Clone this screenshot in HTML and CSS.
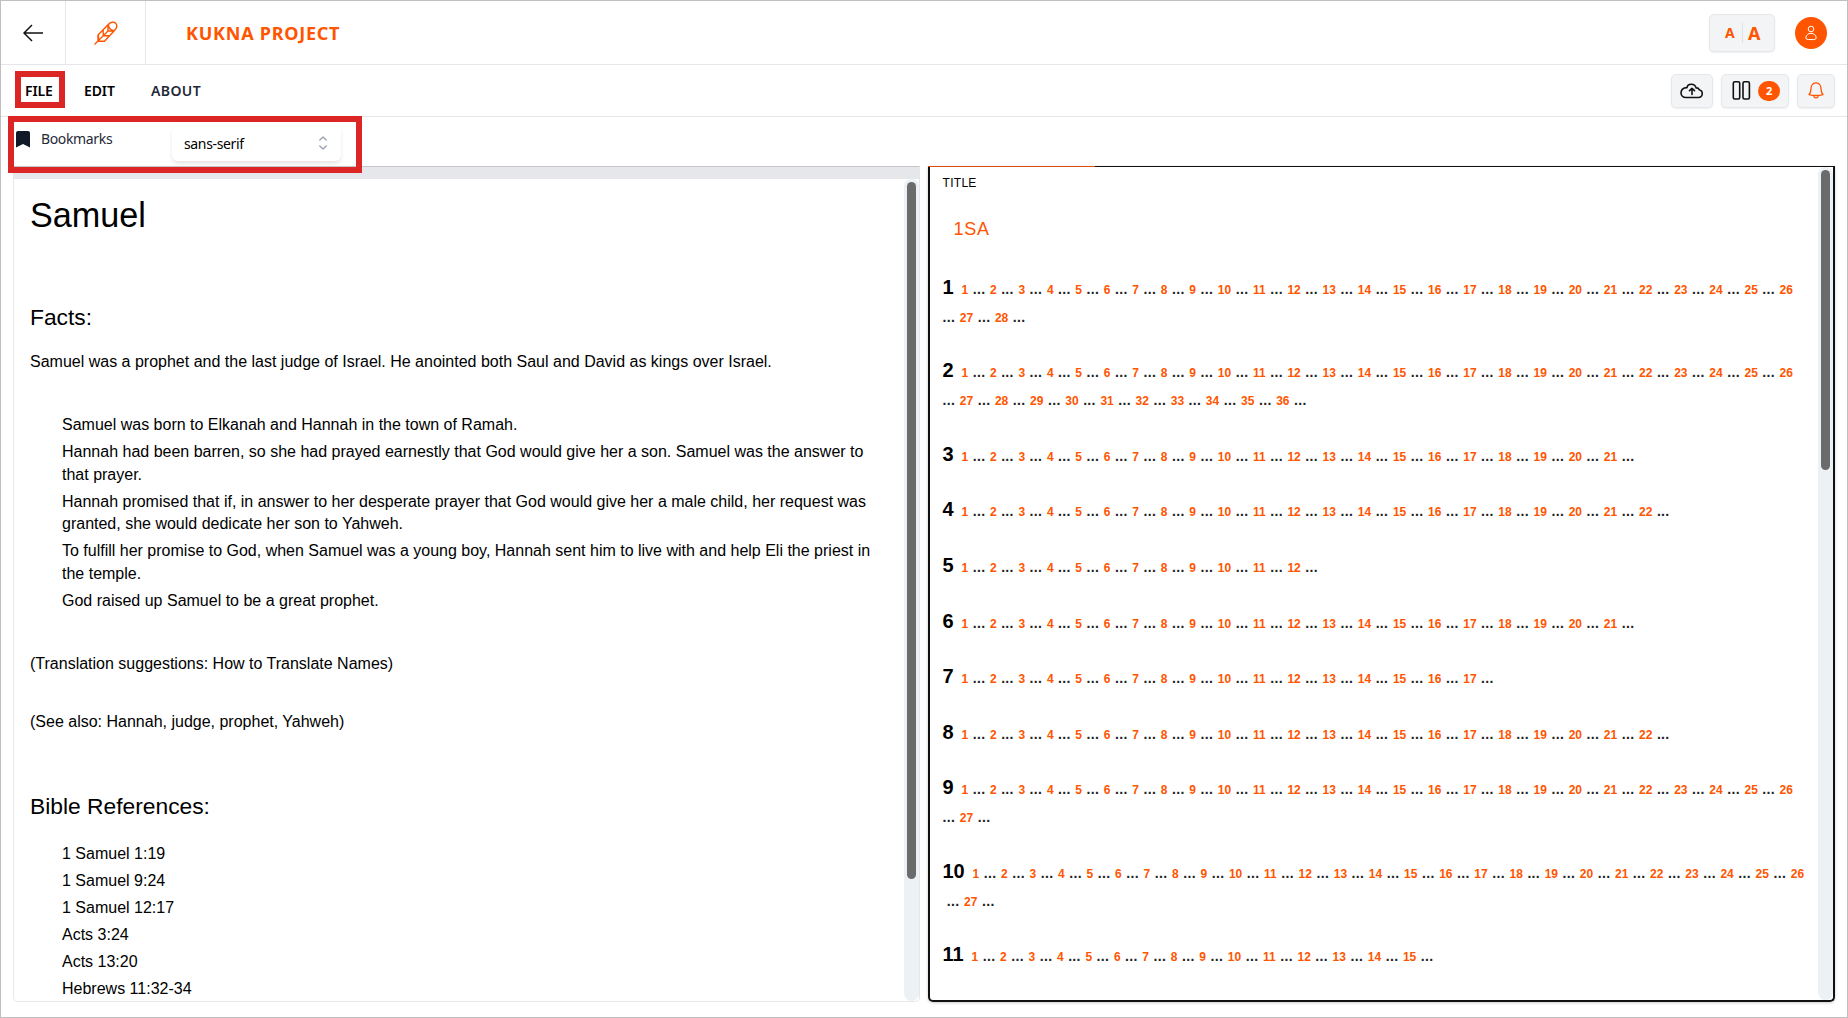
FILE: index.html
```html
<!DOCTYPE html>
<html lang="en">
<head>
<meta charset="utf-8">
<title>Kukna Project</title>
<link rel="stylesheet" href="styles.css">
</head>
<body>
<div class="app">
  <header class="topbar">
    <div class="cell back"><svg width="20" height="18" viewBox="0 0 20 18" fill="none" stroke="#111" stroke-width="1.5"><path d="M9 1 1 9l8 8M1 9h19"/></svg></div>
    <div class="cell logo"><svg width="24" height="24" viewBox="0 0 24 24" fill="none" stroke="#f50" stroke-width="1.4" stroke-linejoin="round" stroke-linecap="round"><path d="M1 23 14 10M4 20.200V14L14.500 3.300c2-2.300 5.500-2.800 7.200-1 1.800 1.800 1.300 5-1 7L10.500 20.200H4M9.200 8.800V14.500M14.500 3.500c-.4 3.200 2.300 6.200 6 6M9.200 14.800h6M4.500 19.500v-5M14 4v6h6"/></svg></div>
    <h1 class="project">KUKNA PROJECT</h1>
    <div class="size"><span class="small">A</span><i></i><span class="large">A</span></div>
    <div class="avatar"><svg width="12" height="16" viewBox="0 0 12 16" fill="none" stroke="#fff" stroke-width="1"><circle cx="6" cy="4" r="2.800"/><path d="M.8 13c0-6.200 10.400-6.200 10.400 0 0 1.200-1.500 1.600-5.200 1.600S.8 14.200.8 13z"/></svg></div>
  </header>
  <nav class="menubar">
    <a class="file">FILE</a><a class="edit">EDIT</a><a class="about">ABOUT</a>
    <div class="tools">
      <div class="tool cloud"><svg width="24" height="16" viewBox="0 0 24 16" fill="none" stroke="#111" stroke-width="1.6" stroke-linecap="round" stroke-linejoin="round"><path d="M6 14.500h12.500a3.900 3.900 0 0 0 .700-7.700c-.5-1.500-1.500-2-3-1.900C14.600-.2 7.600.200 7 4.600 3 4.500 1 7 1 9.800c0 2.700 2 4.700 5 4.700zM12 11.500v-6M9.500 7.700 12 5.300l2.500 2.400"/></svg></div>
      <div class="tool columns"><svg width="19" height="19" viewBox="0 0 19 19" fill="none" stroke="#111" stroke-width="1.600"><rect x="1.300" y=".8" width="6.400" height="17.200" rx="1.500"/><rect x="11" y=".8" width="6.400" height="17.200" rx="1.500"/></svg><span class="badge">2</span></div>
      <div class="tool bell"><svg width="16" height="17" viewBox="0 0 16 17" fill="none" stroke="#f50" stroke-width="1.300" stroke-linejoin="round"><path d="M1 12.600c3-2.600 1-6.600 3-9.600 1.800-2.800 6.200-2.800 8 0 2 3 0 7 3 9.600-4.600 1.200-9.400 1.200-14 0zM5.500 13.500c.5 3.200 4.500 3.200 5 0"/></svg></div>
    </div>
  </nav>
  <div class="submenu">
    <svg class="mark" width="14" height="17" viewBox="0 0 14 17" fill="#111827"><path d="M0 2a2 2 0 0 1 2-2h10a2 2 0 0 1 2 2v14.500L7 13 0 16.500z"/></svg>
    <span class="bookmarks">Bookmarks</span>
    <div class="select"><span>sans-serif</span><svg width="8" height="14" viewBox="0 0 8 14" fill="none" stroke="#9ca3af" stroke-width="1.400" stroke-linecap="round" stroke-linejoin="round"><path d="m.800 4 3.200-3 3.200 3M.800 10 4 13l3.200-3"/></svg></div>
  </div>
  <main class="panels">
    <section class="panel words">
      <div class="strip"></div>
      <div class="body">
        <article>
          <h2 class="term">Samuel</h2>
          <h3 class="facts">Facts:</h3>
          <p class="intro">Samuel was a prophet and the last judge of Israel. He anointed both Saul and David as kings over Israel.</p>
          <ul class="story">
            <li>Samuel was born to Elkanah and Hannah in the town of Ramah.</li>
            <li>Hannah had been barren, so she had prayed earnestly that God would give her a son. Samuel was the answer to that prayer.</li>
            <li>Hannah promised that if, in answer to her desperate prayer that God would give her a male child, her request was granted, she would dedicate her son to Yahweh.</li>
            <li>To fulfill her promise to God, when Samuel was a young boy, Hannah sent him to live with and help Eli the priest in the temple.</li>
            <li>God raised up Samuel to be a great prophet.</li>
          </ul>
          <p class="suggest">(Translation suggestions: How to Translate Names)</p>
          <p class="also">(See also: Hannah, judge, prophet, Yahweh)</p>
          <h3 class="refs">Bible References:</h3>
          <ul class="reflist">
            <li>1 Samuel 1:19</li><li>1 Samuel 9:24</li><li>1 Samuel 12:17</li><li>Acts 3:24</li><li>Acts 13:20</li><li>Hebrews 11:32-34</li>
          </ul>
        </article>
        <div class="track"><div class="thumb"></div></div>
      </div>
    </section>
    <section class="panel editor">
      <div class="text">
        <div class="label">TITLE</div>
        <div class="book">1SA</div>
        <div id="chapters"></div>
      </div>
      <div class="track"><div class="thumb"></div></div>
      <div class="accent"></div>
    </section>
  </main>
  <div class="mark-box box-file"></div>
  <div class="mark-box box-sub"></div>
</div>
<script src="script.js"></script>
</body>
</html>
```
FILE: script.js
```js
// Number of verses in each chapter of 1 Samuel
const verses = [28, 36, 21, 22, 12, 21, 17, 22, 27, 27, 15];
const root = document.getElementById('chapters');
verses.forEach((count, i) => {
  let html = `<b class="chapter">${i + 1}</b>`;
  for (let v = 1; v <= count; v++) {
    const last = v === 26 && count > 26;
    html += `<b class="verse">${v}</b>${last ? (i === 9 ? '<br>&nbsp;...' : '<br>...') : ' ...'} `;
  }
  const p = document.createElement('p');
  p.innerHTML = html;
  root.append(p);
});
```
FILE: styles.css
```css
* { box-sizing: border-box; margin: 0; padding: 0; }
body { background: #fff; font-family: "Noto Sans", sans-serif; color: #000; }
ul { list-style: none; }
svg { display: block; flex: none; }
.app { position: relative; display: flex; flex-direction: column; width: 1848px; height: 1018px; border: 1px solid #c0c0c0; overflow: hidden; }

.topbar { display: flex; align-items: center; height: 64px; flex: none; border-bottom: 1px solid #e5e7eb; padding-right: 20px; }
.cell { display: flex; align-items: center; justify-content: center; height: 63px; border-right: 1px solid #e5e7eb; }
.back { width: 65px; }
.logo { width: 80px; padding-left: 1px; }
.project { flex: 1; padding-left: 40px; font-size: 18px; font-weight: 700; color: #f50; letter-spacing: .75px; }
.size { display: flex; align-items: center; width: 66px; height: 38px; border: 1px solid #e5e7eb; border-radius: 5px; background: #f3f4f6; box-shadow: 0 1px 2px #0001; color: #f50; font-weight: 700; padding-left: 15px; }
.size i { width: 1px; height: 20px; background: #dfe2e7; margin: 0 5px 0 6px; }
.small { font-size: 14px; width: 11px; }
.large { font-size: 18px; }
.avatar { display: flex; align-items: center; justify-content: center; width: 32px; height: 32px; margin-left: 20px; border-radius: 50%; background: #f50; }

.menubar { display: flex; align-items: center; height: 52px; flex: none; border-bottom: 1px solid #e5e7eb; padding: 0 12px 0 24px; font-size: 14px; font-weight: 600; letter-spacing: -.1px; }
.file { width: 59px; }
.edit { width: 67px; }
.about { color: #1f2937; letter-spacing: .4px; }
.tools { display: flex; gap: 8px; margin-left: auto; }
.tool { display: flex; align-items: center; justify-content: center; height: 34px; border: 1px solid #e5e7eb; border-radius: 5px; background: #f3f4f6; box-shadow: 0 1px 2px #0001; }
.cloud { width: 42px; }
.columns { width: 68px; gap: 7px; padding-left: 2px; }
.bell { width: 38px; }
.badge { width: 22px; height: 20px; border-radius: 10px; background: #f50; color: #fff; font-size: 11px; font-weight: 700; line-height: 20px; text-align: center; }

.submenu { display: flex; height: 49px; flex: none; padding-left: 15px; font-size: 14px; letter-spacing: -.35px; }
.mark { margin-top: 14px; }
.bookmarks { width: 131px; margin: 12px 0 0 11px; line-height: 20px; color: #1f2937; }
.select { display: flex; align-items: center; justify-content: space-between; width: 169px; height: 36px; margin-top: 8px; padding: 0 14px 0 12px; border-radius: 6px; background: #fff; box-shadow: 0 3px 5px -1px #0002; }

.panels { display: flex; gap: 8px; height: 836px; flex: none; padding: 0 12px; font-family: "Liberation Sans", Arial, sans-serif; }
.panel { display: flex; height: 836px; }
.words { flex-direction: column; width: 907px; border: 1px solid #e5e7eb; border-top: 1px solid #c3c6cb; border-radius: 0 0 5px 5px; overflow: hidden; }
.strip { height: 12px; background: #e5e7eb; flex: none; }
.body { display: flex; justify-content: space-between; height: 822px; }
article { width: 865px; padding: 15px 0 0 16px; font-size: 16px; line-height: 22.4px; }
.term { font-size: 34.200px; line-height: 42px; font-weight: 400; }
.facts, .refs { font-size: 22.800px; line-height: 28px; font-weight: 400; }
.facts { margin-top: 67px; }
.intro { margin-top: 19.500px; }
.story { margin-top: 41.500px; padding-left: 32px; }
li + li { margin-top: 4.600px; }
.suggest { margin-top: 40.500px; }
.also { margin-top: 36.500px; }
.refs { margin-top: 58.500px; }
.reflist { margin-top: 23px; padding-left: 32px; }

.track { width: 15px; padding: 3px; border-radius: 8px; background: #ebf1f5; flex: none; }
.thumb { width: 9px; height: 697px; border-radius: 5px; background: #6b6b6b; }

.editor { position: relative; justify-content: space-between; width: 908px; border: 2px solid #111; border-top: 0; border-radius: 0 0 5px 5px; box-shadow: 0 1px 3px #0003, inset 0 1px #111; padding-top: 1px; }
.editor .thumb { height: 300px; }
.accent { position: absolute; left: -2px; top: 0; width: 167px; height: 1px; background: #dc4c0a; }
.text { padding: 8px 0 0 13px; white-space: nowrap; }
.label { font-size: 12px; line-height: 16px; letter-spacing: .3px; }
.book { padding-left: 11px; margin-top: 24px; font-size: 18px; line-height: 28px; letter-spacing: .7px; color: #f50; }
#chapters { margin-top: 33px; font-size: 14px; line-height: 27.800px; letter-spacing: .35px; font-weight: 700; color: #222; }
#chapters p { margin-bottom: 27.800px; }
.chapter { font-size: 20px; line-height: 20px; letter-spacing: 0; margin-right: 7.500px; color: #000; }
.verse { font-size: 12px; line-height: 20px; letter-spacing: 0; margin: 0 .300px; color: #f50; }

.mark-box { position: absolute; border: 6px solid #dc2626; }
.box-file { left: 14px; top: 70px; width: 50px; height: 37px; }
.box-sub { left: 7px; top: 115px; width: 354px; height: 57px; }
```
